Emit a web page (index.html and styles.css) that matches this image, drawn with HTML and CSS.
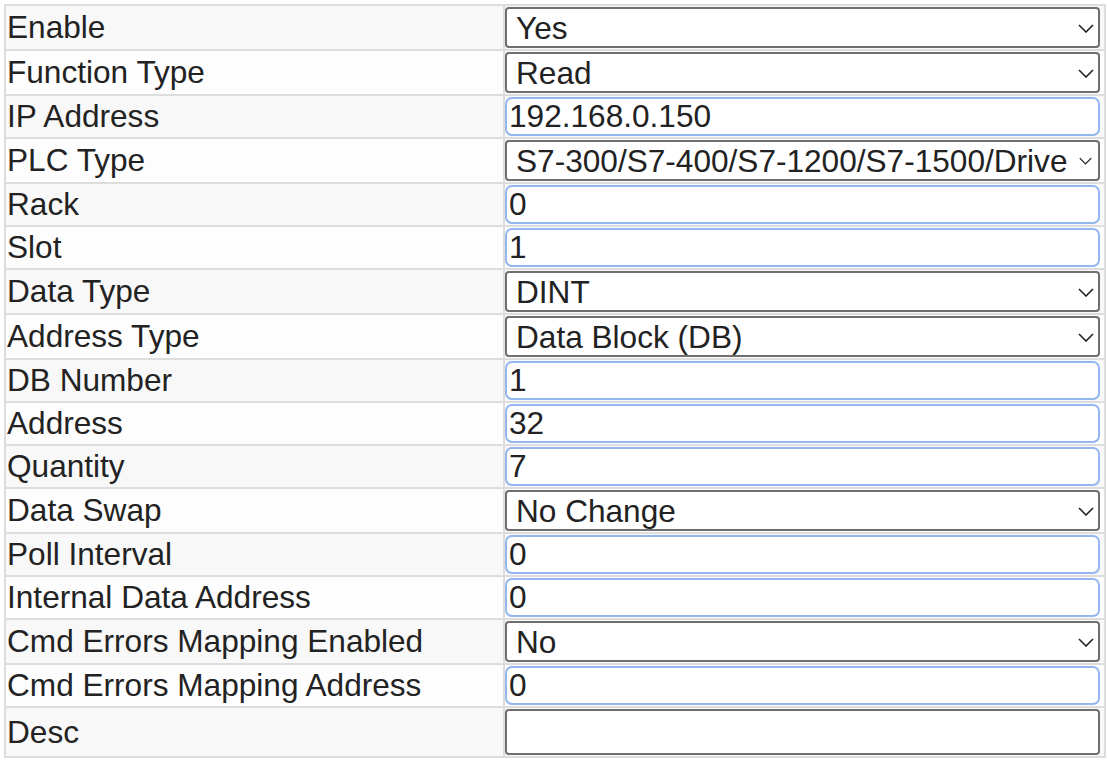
FILE: index.html
```html
<!DOCTYPE html>
<html lang="en">
<head>
    <meta charset="UTF-8">
    <title>S7 Command</title>
    <link rel="stylesheet" href="styles.css">
</head>
<body>
    <!-- Tabel pengaturan perintah PLC -->
    <table class="cmd-table">
        <tr>
            <td class="label">Enable</td>
            <td class="field">
                <div class="select-wrap">
                    <select><option>Yes</option><option>No</option></select>
                    <svg class="chevron" viewBox="0 0 16 9"><path d="M1 1l7 7 7-7"/></svg>
                </div>
            </td>
        </tr>
        <tr>
            <td class="label">Function Type</td>
            <td class="field">
                <div class="select-wrap">
                    <select><option>Read</option><option>Write</option></select>
                    <svg class="chevron" viewBox="0 0 16 9"><path d="M1 1l7 7 7-7"/></svg>
                </div>
            </td>
        </tr>
        <tr>
            <td class="label">IP Address</td>
            <td class="field"><input type="text" value="192.168.0.150"></td>
        </tr>
        <tr>
            <td class="label">PLC Type</td>
            <td class="field">
                <div class="select-wrap">
                    <select><option>S7-300/S7-400/S7-1200/S7-1500/Drive</option><option>S7-200</option></select>
                    <svg class="chevron small" viewBox="0 0 16 9"><path d="M1 1l7 7 7-7"/></svg>
                </div>
            </td>
        </tr>
        <tr>
            <td class="label">Rack</td>
            <td class="field"><input type="text" value="0"></td>
        </tr>
        <tr>
            <td class="label">Slot</td>
            <td class="field"><input type="text" value="1"></td>
        </tr>
        <tr>
            <td class="label">Data Type</td>
            <td class="field">
                <div class="select-wrap">
                    <select><option>DINT</option><option>INT</option><option>REAL</option></select>
                    <svg class="chevron" viewBox="0 0 16 9"><path d="M1 1l7 7 7-7"/></svg>
                </div>
            </td>
        </tr>
        <tr>
            <td class="label">Address Type</td>
            <td class="field">
                <div class="select-wrap">
                    <select><option>Data Block (DB)</option><option>Merker (M)</option></select>
                    <svg class="chevron" viewBox="0 0 16 9"><path d="M1 1l7 7 7-7"/></svg>
                </div>
            </td>
        </tr>
        <tr>
            <td class="label">DB Number</td>
            <td class="field"><input type="text" value="1"></td>
        </tr>
        <tr>
            <td class="label">Address</td>
            <td class="field"><input type="text" value="32"></td>
        </tr>
        <tr>
            <td class="label">Quantity</td>
            <td class="field"><input type="text" value="7"></td>
        </tr>
        <tr>
            <td class="label">Data Swap</td>
            <td class="field">
                <div class="select-wrap">
                    <select><option>No Change</option><option>Swap Bytes</option></select>
                    <svg class="chevron" viewBox="0 0 16 9"><path d="M1 1l7 7 7-7"/></svg>
                </div>
            </td>
        </tr>
        <tr>
            <td class="label">Poll Interval</td>
            <td class="field"><input type="text" value="0"></td>
        </tr>
        <tr>
            <td class="label">Internal Data Address</td>
            <td class="field"><input type="text" value="0"></td>
        </tr>
        <tr>
            <td class="label">Cmd Errors Mapping Enabled</td>
            <td class="field">
                <div class="select-wrap">
                    <select><option>No</option><option>Yes</option></select>
                    <svg class="chevron" viewBox="0 0 16 9"><path d="M1 1l7 7 7-7"/></svg>
                </div>
            </td>
        </tr>
        <tr>
            <td class="label">Cmd Errors Mapping Address</td>
            <td class="field"><input type="text" value="0"></td>
        </tr>
        <tr>
            <td class="label">Desc</td>
            <td class="field"><input type="text" class="desc" value=""></td>
        </tr>
    </table>
</body>
</html>
```

FILE: styles.css
```css
/* Gaya umum untuk body */
body {
    margin: 4px 0 0 4px;
    background: #ffffff;
    font-family: "Liberation Sans", Arial, sans-serif;
    color: #222;
}

/* Tabel utama */
.cmd-table {
    width: 1102px;
    border-collapse: separate;
    border-spacing: 2px;
    background-color: #dddddd;
    font-size: 31.6px;
}

.cmd-table td {
    background-color: #f8f8f8;
    padding: 1px 0;
}

.cmd-table tr:nth-child(even) td {
    background-color: #fdfdfd;
}

/* Kolom label */
.cmd-table .label {
    width: 496px;
    padding-left: 1px;
    white-space: nowrap;
}

/* Kolom input */
.cmd-table .field {
    padding-right: 4px;
}

.cmd-table select,
.cmd-table input[type="text"] {
    display: block;
    width: 100%;
    margin: 0;
    font-family: "Liberation Sans", Arial, sans-serif;
    font-size: 31.6px;
    color: #222;
    box-sizing: border-box;
    background-color: #ffffff;
}

/* Gaya untuk dropdown */
.select-wrap {
    position: relative;
}

.cmd-table select {
    height: 41px;
    padding: 0 30px 0 9px;
    border: 2px solid #6f6f6f;
    border-radius: 4px;
    appearance: none;
    -webkit-appearance: none;
}

/* Panah dropdown */
.chevron {
    position: absolute;
    right: 6px;
    top: 17px;
    width: 16px;
    height: 9px;
    fill: none;
    stroke: #222;
    stroke-width: 1.6;
    pointer-events: none;
}

.chevron.small {
    right: 8px;
    width: 13px;
    height: 8px;
}

/* Gaya untuk input teks */
.cmd-table input[type="text"] {
    height: 39px;
    padding: 0 2px;
    border: 2px solid #93b7ee;
    border-radius: 7px;
    outline: none;
}

.cmd-table input.desc {
    height: 46px;
    border-color: #6f6f6f;
    border-radius: 4px;
}
```
